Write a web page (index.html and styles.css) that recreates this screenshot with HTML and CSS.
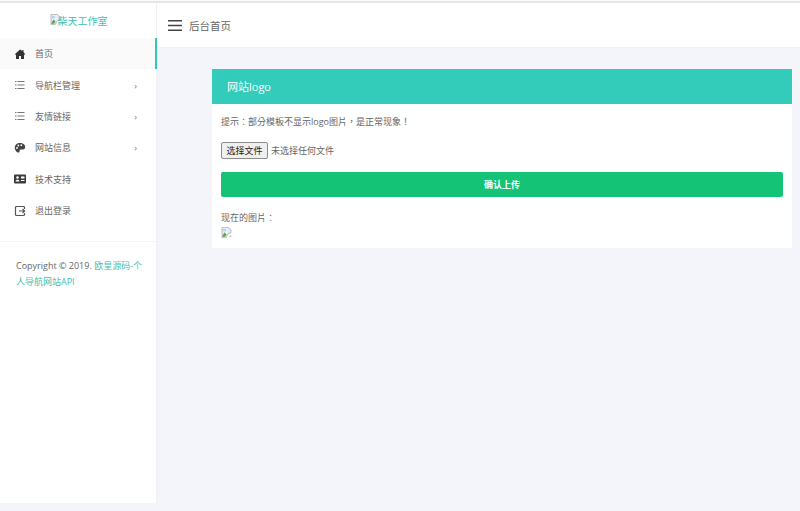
FILE: index.html
```html
<!DOCTYPE html>
<html lang="zh-CN">
<head>
<meta charset="utf-8">
<title>后台首页</title>
<link rel="stylesheet" href="styles.css">
</head>
<body>
<div class="topline"></div>
<div class="app">
  <aside class="sidebar">
    <div class="logo">
      <svg class="broken" viewBox="0 0 16 16"><path d="M1.500 .5h9l4 4v4l-4 1-3 6h-6z" fill="#e8eef8" stroke="#a0a0a0"/><path d="M2 13l3-5 3 3-2 3H2z" fill="#5aa83c"/><path d="M3 3h4v3H3z" fill="#b9cdf0"/><path d="M11 15h4v-4z" fill="#c8c8c8"/></svg><a class="logo-text">柴天工作室</a>
    </div>
    <nav class="menu">
      <a class="item active"><svg class="ico" viewBox="0 0 12 12"><path d="M6 1.500L.8 6.200l.6.6L2 6.400V11h3V8h2v3h3V6.400l.6.4.6-.6L9.500 4V2H8.300v1L6 1.500z" fill="#333"/></svg><span class="label">首页</span></a>
      <a class="item"><svg class="ico" viewBox="0 0 12 12"><path d="M1 2.500h1.500M3.500 2.500h7M1 6h1.500M3.500 6h7M1 9.500h1.500M3.500 9.500h7" stroke="#777" fill="none"/></svg><span class="label">导航栏管理</span><span class="arrow">›</span></a>
      <a class="item"><svg class="ico" viewBox="0 0 12 12"><path d="M1 2.500h1.500M3.500 2.500h7M1 6h1.500M3.500 6h7M1 9.500h1.500M3.500 9.500h7" stroke="#777" fill="none"/></svg><span class="label">友情链接</span><span class="arrow">›</span></a>
      <a class="item"><svg class="ico" viewBox="0 0 12 12"><path d="M6 1C3 1 .8 3 .8 5.700c0 2.500 2 4.800 3.700 4.800 1.300 0 1-1.200 1.200-2 .2-.9 1.200-.9 2.300-.9 1.800 0 3.200-.8 3.200-2.700C11.200 2.700 9 1 6 1z" fill="#444"/><circle cx="3" cy="6" r=".9" fill="#fff"/><circle cx="4.300" cy="3.500" r=".9" fill="#fff"/><circle cx="7.300" cy="3.200" r=".9" fill="#fff"/></svg><span class="label">网站信息</span><span class="arrow">›</span></a>
      <a class="item"><svg class="ico" viewBox="0 0 12 12"><rect x="0" y="1.500" width="12" height="9" rx="1" fill="#3a3a3a"/><circle cx="3.500" cy="4.500" r="1.300" fill="#fff"/><path d="M1.500 8.500c0-2.400 4-2.400 4 0z" fill="#fff"/><path d="M7 3.500h3.500v2H7zM7 7h3.500v1H7z" fill="#fff"/></svg><span class="label">技术支持</span></a>
      <a class="item"><svg class="ico" viewBox="0 0 12 12"><path d="M10.500 4V2.500a1 1 0 0 0-1-1h-7a1 1 0 0 0-1 1v7a1 1 0 0 0 1 1h7a1 1 0 0 0 1-1V8" fill="none" stroke="#555" stroke-width="1.200"/><path d="M5 6h5.500M8.500 4l2.200 2-2.200 2" fill="none" stroke="#555" stroke-width="1.100"/></svg><span class="label">退出登录</span></a>
    </nav>
    <div class="copyright">Copyright © 2019. <a class="link">欧皇源码-个人导航网站API</a></div>
  </aside>
  <div class="main">
    <header class="header">
      <svg class="burger" viewBox="0 0 14 11"><path d="M0 .75h14M0 5.500h14M0 10.250h14" stroke="#444" stroke-width="1.300" fill="none"/></svg>
      <span class="title">后台首页</span>
    </header>
    <section class="content">
      <div class="card">
        <div class="card-head">网站logo</div>
        <div class="card-body">
          <p class="tip" lang="zh-Hant">提示：部分模板不显示logo图片，是正常现象！</p>
          <div class="file-row"><button class="file-btn" type="button">选择文件</button><span class="file-name">未选择任何文件</span></div>
          <button class="submit" type="button">确认上传</button>
          <p class="now" lang="zh-Hant">现在的图片：</p>
          <svg class="broken block" viewBox="0 0 16 16"><path d="M1.500 .5h9l4 4v4l-4 1-3 6h-6z" fill="#e8eef8" stroke="#a0a0a0"/><path d="M2 13l3-5 3 3-2 3H2z" fill="#5aa83c"/><path d="M3 3h4v3H3z" fill="#b9cdf0"/><path d="M11 15h4v-4z" fill="#c8c8c8"/></svg>
        </div>
      </div>
    </section>
  </div>
</div>
</body>
</html>
```

FILE: styles.css
```css
* { box-sizing: border-box; }
html, body { margin: 0; height: 100%; }
body {
  background: #f3f5fb;
  font-family: "Open Sans", "Noto Sans CJK SC", sans-serif;
  font-size: 9px;
  color: #666;
  overflow: hidden;
}
.topline { height: 3px; background: #e6e6e8; border-top: 1px solid #f8f8f8; }
.app { display: flex; height: 500px; }
.sidebar {
  width: 157px;
  flex: none;
  background: #fff;
  border-right: 1px solid #eef0f5;
}
.logo {
  height: 35px;
  display: flex;
  align-items: center;
  justify-content: center;
  padding-left: 1px;
}
.logo-text { color: #3fc1b1; font-size: 10px; margin-top: -1px; }
.broken { width: 11px; height: 11px; flex: none; }
.logo .broken { margin-top: -2px; margin-right: -3px; }
.menu {
  display: flex;
  flex-direction: column;
  padding-bottom: 15px;
  border-bottom: 1px solid #f3f4f7;
}
.item {
  height: 31.4px;
  display: flex;
  align-items: center;
  padding: 0 19px 0 14px;
  color: #666;
}
.item.active {
  background: #fafafa;
  margin-right: -1px;
  border-right: 2px solid #33c6b5;
}
.ico { width: 12px; height: 12px; flex: none; margin-right: 9px; }
.label { flex: 1; }
.arrow { font-size: 9px; color: #777; line-height: 1; }
.copyright {
  padding: 16px 12px 0 16px;
  font-size: 9px;
  line-height: 15.500px;
  color: #666;
}
.link { color: #3fc1b1; }
.main { flex: 1; min-width: 0; display: flex; flex-direction: column; }
.header {
  height: 45px;
  flex: none;
  background: #fff;
  display: flex;
  align-items: center;
  padding-left: 11px;
  gap: 7px;
  border-bottom: 1px solid #f0f1f6;
}
.burger { width: 14px; height: 11px; }
.title { font-size: 10.500px; color: #666; }
.content { padding: 21px 8px 0 55px; }
.card { background: #fff; height: 179px; }
.card-head {
  height: 35px;
  background: #33cbb9;
  color: #fff;
  font-size: 11px;
  line-height: 35px;
  padding-left: 15px;
}
.card-body { padding: 0 9px 0 9px; }
.tip, .now { font-family: "Open Sans", "Noto Sans CJK TC", sans-serif; }
.tip { margin: 0; padding-top: 11px; line-height: 13px; font-size: 9px; }
.file-row { display: flex; align-items: center; margin-top: 13px; height: 18px; }
.file-btn {
  width: 47px;
  height: 17px;
  padding: 0;
  font-size: 9px;
  font-family: inherit;
  color: #222;
  background: #efefef;
  border: 1px solid #8d8d8d;
  border-radius: 2px;
}
.file-name { margin-left: 3px; }
.submit {
  display: block;
  width: 100%;
  height: 25px;
  margin-top: 13px;
  border: 0;
  border-radius: 2px;
  background: #15c377;
  color: #fff;
  font-family: inherit;
  font-size: 9px;
  font-weight: 700;
}
.now { margin: 14px 0 0; line-height: 13px; }
.block { display: block; margin-top: 3px; }
```
